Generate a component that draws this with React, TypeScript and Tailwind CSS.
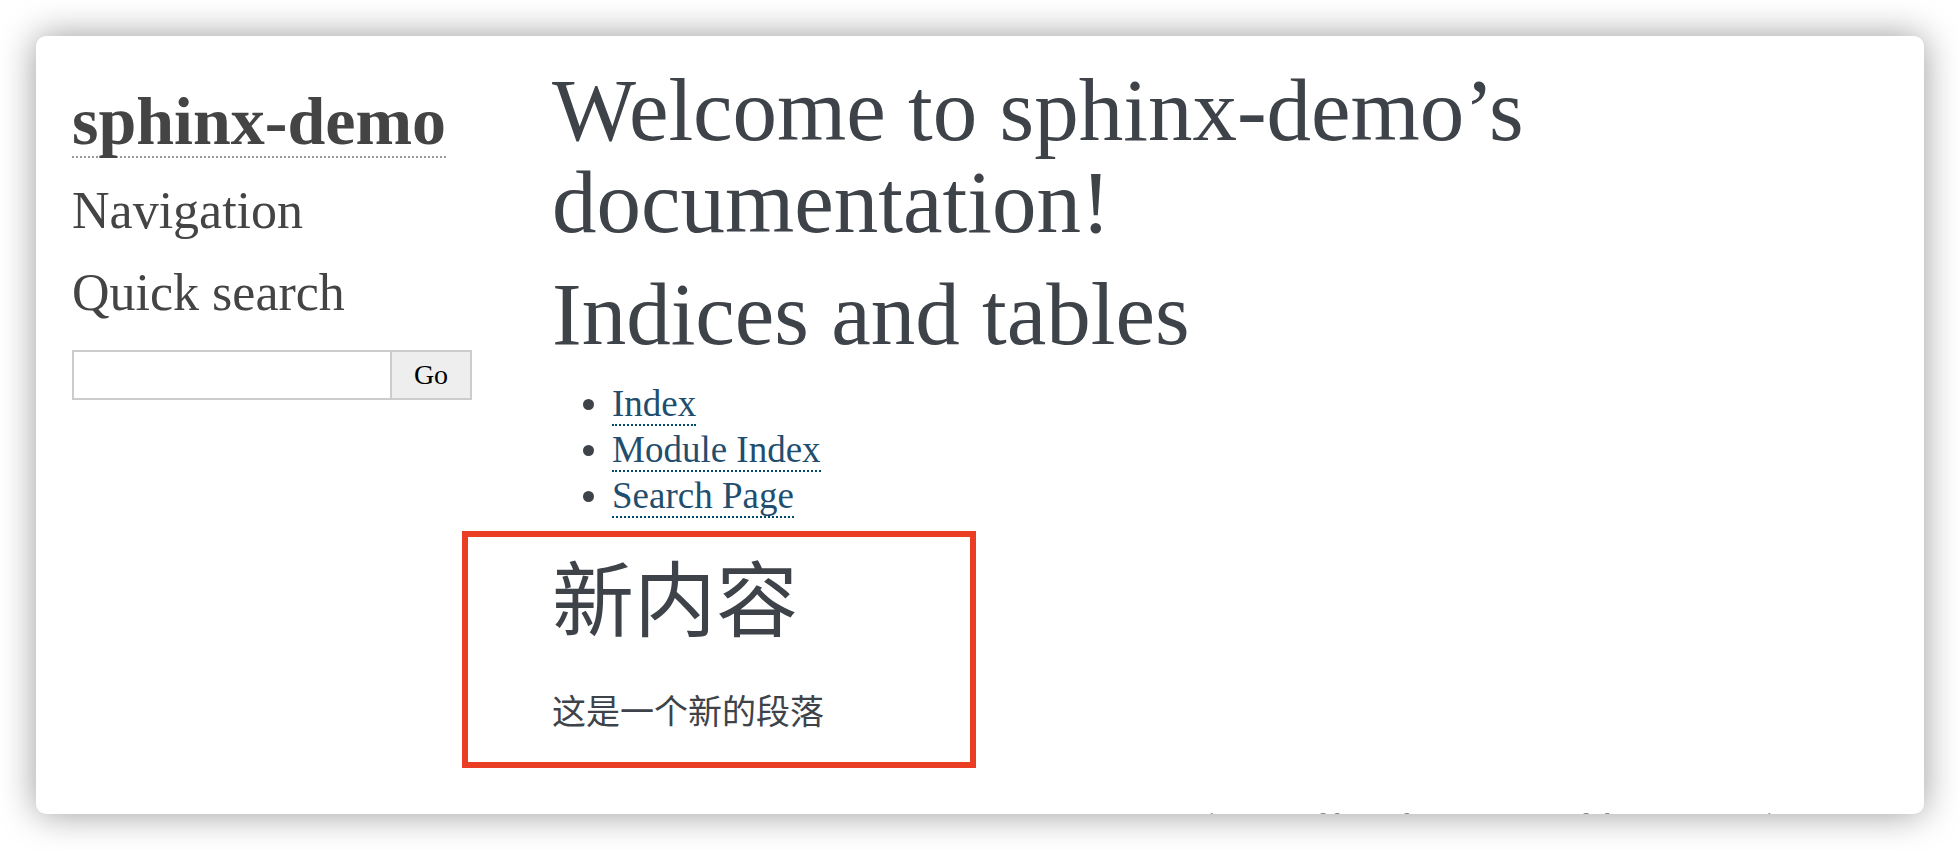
const indexLinks = ["Index", "Module Index", "Search Page"];

function Sidebar() {
  return (
    <aside className="w-[400px] shrink-0 pt-[50px] text-[#444444]">
      <h1 className="mb-[22px] text-[68px] font-bold leading-[70px]">
        <a href="#home" className="block w-fit border-b-2 border-dotted border-[#999999]">
          sphinx-demo
        </a>
      </h1>
      <h3 className="mb-5 text-[52px] leading-[62px]">Navigation</h3>
      <h3 id="quick-search" className="mb-[26px] text-[52px] leading-[62px]">
        Quick search
      </h3>
      <form role="search" className="flex" onSubmit={(e) => e.preventDefault()}>
        <input
          type="text"
          aria-labelledby="quick-search"
          className="h-[50px] min-w-0 flex-1 border-2 border-r-0 border-[#cccccc] bg-white px-3 text-[28px] outline-none"
        />
        <button
          type="submit"
          className="h-[50px] w-[82px] border-2 border-[#cccccc] bg-[#eeeeee] text-[28px] text-black"
        >
          Go
        </button>
      </form>
    </aside>
  );
}

function Content() {
  return (
    <main className="min-w-0 flex-1 pt-7 text-[#3e4349]">
      <h1 className="text-[89px] leading-[92px]">Welcome to sphinx-demo’s documentation!</h1>
      <h1 className="mt-5 text-[89px] leading-[92px]">Indices and tables</h1>
      <ul className="ml-[60px] mt-[23px] list-disc text-[37px] leading-[41px]">
        {indexLinks.map((label) => (
          <li key={label} className="mb-[3px]">
            <a
              href="#index"
              className="inline-block border-b-2 border-dotted border-[#004b6b] align-top text-[#1f4e6e]"
            >
              {label}
            </a>
          </li>
        ))}
      </ul>
      <section className="-ml-[90px] mt-[13px] w-fit border-6 border-[#ea3e24] pb-[26px] pl-[84px] pr-[146px] pt-[20px]">
        <h1 className="text-[82px] leading-[92px]">新内容</h1>
        <p className="mt-[41px] text-[34px] leading-[46px]">这是一个新的段落</p>
      </section>
    </main>
  );
}

export default function App() {
  return (
    <div className="min-h-screen bg-white p-9 font-['Liberation_Serif','Noto_Sans_CJK_SC',serif]">
      <div className="overflow-hidden rounded-[10px] bg-white shadow-[0_0_36px_rgba(0,0,0,0.4)]">
        <div className="flex gap-20 pl-9">
          <Sidebar />
          <Content />
        </div>
        <footer className="mt-[45px] h-px overflow-hidden text-right text-[30px] text-[#888888]">
          <p className="-mt-[5px] leading-[30px]">| Powered by Sphinx 4.4.0 &amp; Alabaster 0.7.12 | Page source</p>
        </footer>
      </div>
    </div>
  );
}
